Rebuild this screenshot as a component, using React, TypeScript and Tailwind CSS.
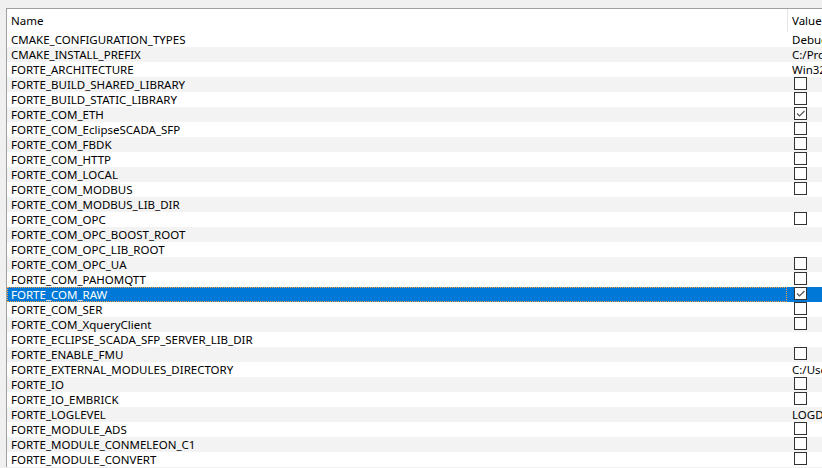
import * as React from 'react';

type Value = { kind: 'text'; text: string } | { kind: 'check'; checked: boolean } | { kind: 'none' };

const txt = (text: string): Value => ({ kind: 'text', text });
const box = (checked = false): Value => ({ kind: 'check', checked });
const none: Value = { kind: 'none' };

const rows: [string, Value][] = [
  ['CMAKE_CONFIGURATION_TYPES', txt('Debug;Release')],
  ['CMAKE_INSTALL_PREFIX', txt('C:/Program Files/FORTE')],
  ['FORTE_ARCHITECTURE', txt('Win32')],
  ['FORTE_BUILD_SHARED_LIBRARY', box()],
  ['FORTE_BUILD_STATIC_LIBRARY', box()],
  ['FORTE_COM_ETH', box(true)],
  ['FORTE_COM_EclipseSCADA_SFP', box()],
  ['FORTE_COM_FBDK', box()],
  ['FORTE_COM_HTTP', box()],
  ['FORTE_COM_LOCAL', box()],
  ['FORTE_COM_MODBUS', box()],
  ['FORTE_COM_MODBUS_LIB_DIR', none],
  ['FORTE_COM_OPC', box()],
  ['FORTE_COM_OPC_BOOST_ROOT', none],
  ['FORTE_COM_OPC_LIB_ROOT', none],
  ['FORTE_COM_OPC_UA', box()],
  ['FORTE_COM_PAHOMQTT', box()],
  ['FORTE_COM_RAW', box(true)],
  ['FORTE_COM_SER', box()],
  ['FORTE_COM_XqueryClient', box()],
  ['FORTE_ECLIPSE_SCADA_SFP_SERVER_LIB_DIR', none],
  ['FORTE_ENABLE_FMU', box()],
  ['FORTE_EXTERNAL_MODULES_DIRECTORY', txt('C:/Users/forte/modules')],
  ['FORTE_IO', box()],
  ['FORTE_IO_EMBRICK', box()],
  ['FORTE_LOGLEVEL', txt('LOGDEBUG')],
  ['FORTE_MODULE_ADS', box()],
  ['FORTE_MODULE_CONMELEON_C1', box()],
  ['FORTE_MODULE_CONVERT', box()],
];

const SELECTED = 'FORTE_COM_RAW';

function CheckBox({ checked }: { checked: boolean }) {
  return (
    <div className="-mt-px ml-[2px] h-[13px] w-[13px] border border-[#333333] bg-white">
      {checked && (
        <svg width="11" height="11" viewBox="0 0 11 11" className="block">
          <path d="M2 5.5 L4.5 8 L9.5 3" fill="none" stroke="#555555" strokeWidth="1.2" />
        </svg>
      )}
    </div>
  );
}

function Row({ name, value, index }: { name: string; value: Value; index: number }) {
  const selected = name === SELECTED;
  const bg = selected ? 'bg-[#0078d7] text-white' : index % 2 === 1 ? 'bg-[#f3f3f3]' : 'bg-white';
  return (
    <div className={`flex h-[15px] overflow-hidden ${bg}`}>
      <div
        className={`w-[780px] shrink-0 whitespace-nowrap ${
          selected
            ? 'border border-dotted border-[#f5a142] pl-[3px] leading-[13px]'
            : 'pl-[4px] pt-px leading-[14px]'
        }`}
      >
        {name}
      </div>
      <div className="flex-1 pl-[5px] pt-px leading-[14px] whitespace-nowrap">
        {value.kind === 'text' && value.text}
        {value.kind === 'check' && <CheckBox checked={value.checked} />}
      </div>
    </div>
  );
}

export default function App() {
  return (
    <div
      className="h-[468px] w-[822px] overflow-hidden bg-[#f0f0f0] pl-[6px] pt-[8px] text-[11.5px] text-black"
      style={{ fontFamily: '"Noto Sans", "Open Sans", sans-serif' }}
    >
      <div className="w-[900px] border-l border-t border-[#a0a0a0] bg-white">
        <div className="flex h-[23px]">
          <div className="w-[780px] shrink-0 pl-[4px] pt-px leading-[22px]">Name</div>
          <div className="flex-1 border-l border-[#e5e5e5] pl-[4px] pt-px leading-[22px]">Value</div>
        </div>
        {rows.map(([name, value], i) => (
          <Row key={name} name={name} value={value} index={i} />
        ))}
      </div>
    </div>
  );
}
